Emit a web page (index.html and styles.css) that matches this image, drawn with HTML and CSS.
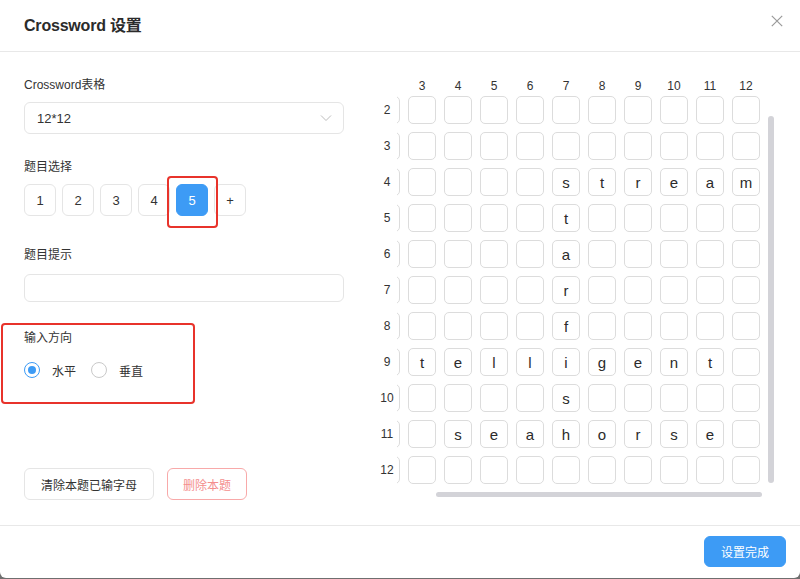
FILE: index.html
```html
<!DOCTYPE html>
<html lang="zh">
<head>
<meta charset="utf-8">
<title>Crossword 设置</title>
<link rel="stylesheet" href="styles.css">
</head>
<body>
<div class="modal">
  <div class="modal-header">
    <div class="title">Crossword 设置</div>
    <svg class="close" width="12" height="12" viewBox="0 0 12 12"><path d="M0.8 0.8 L11.2 11.2 M11.2 0.8 L0.8 11.2" stroke="#9a9a9a" stroke-width="1.2" fill="none"/></svg>
  </div>
  <div class="modal-body">
    <div class="left">
      <div class="field-label first">Crossword表格</div>
      <div class="select">
        <span>12*12</span>
        <svg width="12" height="8" viewBox="0 0 12 8"><path d="M1 1.5 L6 6.5 L11 1.5" stroke="#bdbdbd" stroke-width="1" fill="none"/></svg>
      </div>
      <div class="field-label l2">题目选择</div>
      <div class="qbtns">
        <span class="qbtn">1</span>
        <span class="qbtn">2</span>
        <span class="qbtn">3</span>
        <span class="qbtn">4</span>
        <span class="qbtn active">5<i class="mark"></i></span>
        <span class="qbtn">+</span>
      </div>
      <div class="field-label l3">题目提示</div>
      <div class="input"></div>
      <div class="direction">
        <i class="mark2"></i>
        <div class="field-label">输入方向</div>
        <div class="radios">
          <span class="radio checked"></span><span class="rtext">水平</span>
          <span class="radio"></span><span class="rtext">垂直</span>
        </div>
      </div>
      <div class="actions">
        <span class="btn">清除本题已输字母</span>
        <span class="btn danger">删除本题</span>
      </div>
    </div>
    <div class="board">
      <div class="rlabels">
        <span class="rlabel">2</span><span class="rlabel">3</span><span class="rlabel">4</span><span class="rlabel">5</span><span class="rlabel">6</span><span class="rlabel">7</span><span class="rlabel">8</span><span class="rlabel">9</span><span class="rlabel">10</span><span class="rlabel">11</span><span class="rlabel">12</span>
      </div>
      <div class="viewport">
        <div class="track">
          <div class="cols">
            <span class="col"></span><span class="col">3</span><span class="col">4</span><span class="col">5</span><span class="col">6</span><span class="col">7</span><span class="col">8</span><span class="col">9</span><span class="col">10</span><span class="col">11</span><span class="col">12</span>
          </div>
          <div class="rows">
            <div class="row"><span class="cell"></span><span class="cell"></span><span class="cell"></span><span class="cell"></span><span class="cell"></span><span class="cell"></span><span class="cell"></span><span class="cell"></span><span class="cell"></span><span class="cell"></span><span class="cell"></span></div>
            <div class="row"><span class="cell"></span><span class="cell"></span><span class="cell"></span><span class="cell"></span><span class="cell"></span><span class="cell"></span><span class="cell"></span><span class="cell"></span><span class="cell"></span><span class="cell"></span><span class="cell"></span></div>
            <div class="row"><span class="cell"></span><span class="cell"></span><span class="cell"></span><span class="cell"></span><span class="cell"></span><span class="cell">s</span><span class="cell">t</span><span class="cell">r</span><span class="cell">e</span><span class="cell">a</span><span class="cell">m</span></div>
            <div class="row"><span class="cell"></span><span class="cell"></span><span class="cell"></span><span class="cell"></span><span class="cell"></span><span class="cell">t</span><span class="cell"></span><span class="cell"></span><span class="cell"></span><span class="cell"></span><span class="cell"></span></div>
            <div class="row"><span class="cell"></span><span class="cell"></span><span class="cell"></span><span class="cell"></span><span class="cell"></span><span class="cell">a</span><span class="cell"></span><span class="cell"></span><span class="cell"></span><span class="cell"></span><span class="cell"></span></div>
            <div class="row"><span class="cell"></span><span class="cell"></span><span class="cell"></span><span class="cell"></span><span class="cell"></span><span class="cell">r</span><span class="cell"></span><span class="cell"></span><span class="cell"></span><span class="cell"></span><span class="cell"></span></div>
            <div class="row"><span class="cell"></span><span class="cell"></span><span class="cell"></span><span class="cell"></span><span class="cell"></span><span class="cell">f</span><span class="cell"></span><span class="cell"></span><span class="cell"></span><span class="cell"></span><span class="cell"></span></div>
            <div class="row"><span class="cell"></span><span class="cell">t</span><span class="cell">e</span><span class="cell">l</span><span class="cell">l</span><span class="cell">i</span><span class="cell">g</span><span class="cell">e</span><span class="cell">n</span><span class="cell">t</span><span class="cell"></span></div>
            <div class="row"><span class="cell"></span><span class="cell"></span><span class="cell"></span><span class="cell"></span><span class="cell"></span><span class="cell">s</span><span class="cell"></span><span class="cell"></span><span class="cell"></span><span class="cell"></span><span class="cell"></span></div>
            <div class="row"><span class="cell"></span><span class="cell"></span><span class="cell">s</span><span class="cell">e</span><span class="cell">a</span><span class="cell">h</span><span class="cell">o</span><span class="cell">r</span><span class="cell">s</span><span class="cell">e</span><span class="cell"></span></div>
            <div class="row"><span class="cell"></span><span class="cell"></span><span class="cell"></span><span class="cell"></span><span class="cell"></span><span class="cell"></span><span class="cell"></span><span class="cell"></span><span class="cell"></span><span class="cell"></span><span class="cell"></span></div>
          </div>
        </div>
      </div>
      <span class="vbar"></span>
      <span class="hbar"></span>
    </div>
  </div>
  <div class="modal-footer">
    <span class="btn primary">设置完成</span>
  </div>
</div>
</body>
</html>
```

FILE: styles.css
```css
* { box-sizing: border-box; }
html, body { margin: 0; height: 100%; }
body {
  background: #6f6f6f;
  font-family: "Liberation Sans", "Noto Sans CJK SC", sans-serif;
  color: #333;
}
.modal {
  width: 800px;
  height: 578px;
  background: #fff;
  border-radius: 0 0 6px 6px;
  display: flex;
  flex-direction: column;
}
.modal-header {
  height: 52px;
  flex: none;
  border-bottom: 1px solid #e8e8e8;
  display: flex;
  align-items: center;
  justify-content: space-between;
  padding: 0 17px 4px 24px;
}
.title { font-size: 16px; font-weight: bold; color: #2b2b2b; letter-spacing: -0.2px; }
.close { margin-bottom: 6px; }
.modal-body {
  flex: 1;
  display: flex;
  padding: 24px 0 25px 24px;
}
.left {
  width: 320px;
  flex: none;
  display: flex;
  flex-direction: column;
}
.field-label { font-size: 12px; line-height: 16px; color: #333; }
.field-label.first { margin-top: 1px; }
.select {
  margin-top: 9px;
  height: 32px;
  border: 1px solid #e5e5e5;
  border-radius: 6px;
  display: flex;
  align-items: center;
  justify-content: space-between;
  padding: 0 11px 0 12px;
  font-size: 13px;
}
.l2 { margin-top: 25px; }
.qbtns { margin-top: 9px; display: flex; gap: 6px; }
.qbtn {
  position: relative;
  width: 32px;
  height: 32px;
  border: 1px solid #e5e5e5;
  border-radius: 6px;
  display: flex;
  align-items: center;
  justify-content: center;
  font-size: 13px;
  color: #333;
}
.qbtn.active { background: #3d9bf5; border-color: #3d9bf5; color: #fff; }
.mark {
  position: absolute;
  left: -10px;
  top: -9px;
  width: 51px;
  height: 52px;
  border: 2px solid #e8332b;
  border-radius: 4px;
  z-index: 2;
}
.l3 { margin-top: 31px; }
.input {
  margin-top: 11px;
  height: 28px;
  border: 1px solid #e5e5e5;
  border-radius: 6px;
}
.direction { position: relative; margin-top: 28px; }
.mark2 {
  position: absolute;
  left: -23px;
  top: -7px;
  width: 194px;
  height: 81px;
  border: 2px solid #e8332b;
  border-radius: 4px;
}
.radios {
  margin-top: 16px;
  display: flex;
  align-items: center;
  height: 16px;
}
.radio {
  width: 16px;
  height: 16px;
  border: 1px solid #c9c9c9;
  border-radius: 50%;
  display: flex;
  align-items: center;
  justify-content: center;
}
.radio.checked { border-color: #3d9bf5; }
.radio.checked::after {
  content: "";
  width: 8px;
  height: 8px;
  border-radius: 50%;
  background: #3d9bf5;
}
.rtext { font-size: 12px; margin-left: 12px; margin-right: 15px; }
.actions { margin-top: auto; display: flex; gap: 13px; }
.btn {
  height: 32px;
  padding: 0 16px;
  border: 1px solid #e5e5e5;
  border-radius: 6px;
  display: inline-flex;
  align-items: center;
  font-size: 12px;
  color: #333;
}
.btn.danger { border-color: #f8a9a9; color: #f48e8e; padding: 0 15px; }
.btn.primary {
  background: #3d9bf5;
  border-color: #3d9bf5;
  color: #fff;
  height: 31px;
  padding: 0 16px;
  font-size: 12px;
}
.board {
  position: relative;
  margin-left: 29px;
  display: flex;
  align-items: flex-start;
}
.rlabels {
  width: 24px;
  padding-top: 20px;
  padding-left: 4px;
  display: flex;
  flex-direction: column;
  gap: 8px;
}
.rlabel {
  height: 28px;
  line-height: 28px;
  text-align: center;
  font-size: 12px;
}
.viewport { width: 369px; overflow: hidden; }
.track { margin-left: -25px; width: 388px; }
.cols { display: flex; gap: 8px; height: 20px; }
.col { width: 28px; flex: none; text-align: center; font-size: 12px; line-height: 20px; }
.rows { display: flex; flex-direction: column; gap: 8px; }
.row { display: flex; gap: 8px; }
.cell {
  width: 28px;
  height: 28px;
  flex: none;
  border: 1px solid #dcdcdc;
  border-radius: 5px;
  display: flex;
  align-items: center;
  justify-content: center;
  font-size: 15px;
  color: #2b2b2b;
}
.vbar {
  position: absolute;
  left: 395px;
  top: 40px;
  width: 6px;
  height: 367px;
  background: #d3d3d8;
  border-radius: 3px;
}
.hbar {
  position: absolute;
  left: 63px;
  top: 416px;
  width: 326px;
  height: 5px;
  background: #d3d3d8;
  border-radius: 3px;
}
.modal-footer {
  height: 53px;
  flex: none;
  border-top: 1px solid #e8e8e8;
  display: flex;
  justify-content: flex-end;
  align-items: flex-start;
  padding: 10px 14px 0 0;
}
```
